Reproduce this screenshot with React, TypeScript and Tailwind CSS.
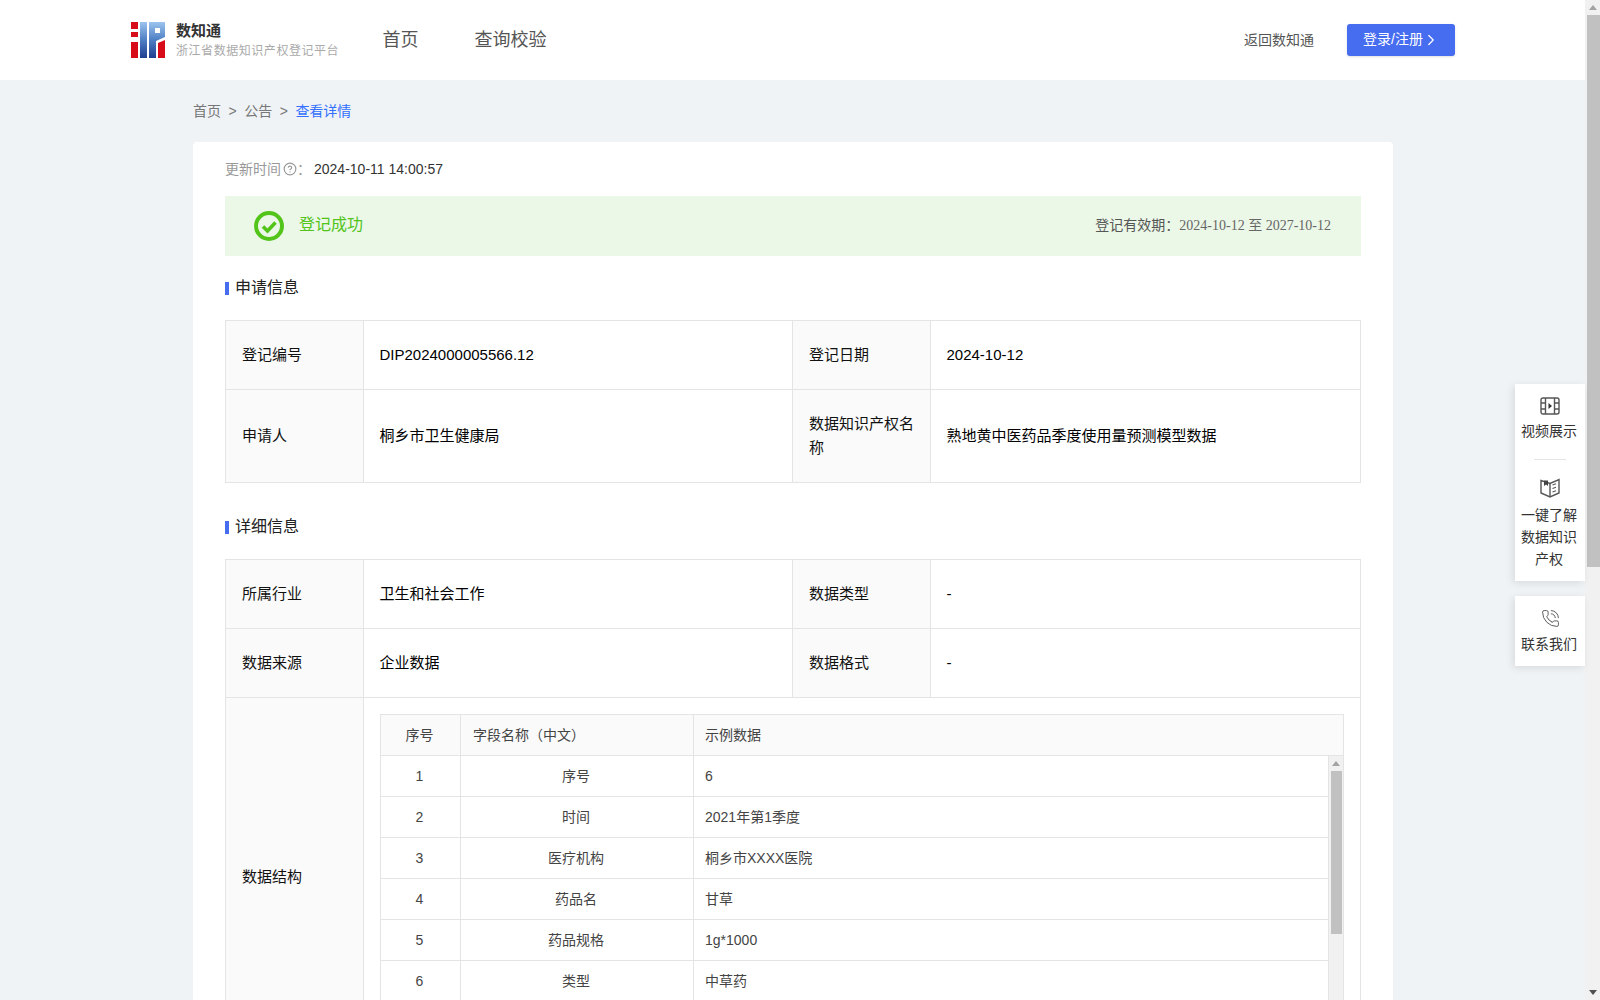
import { ChevronRight, CircleHelp, PhoneCall } from "lucide-react";

const fontStack = "font-['Liberation_Sans','Noto_Sans_CJK_SC',sans-serif]";

const fields = [
  ["1", "序号", "6"],
  ["2", "时间", "2021年第1季度"],
  ["3", "医疗机构", "桐乡市XXXX医院"],
  ["4", "药品名", "甘草"],
  ["5", "药品规格", "1g*1000"],
  ["6", "类型", "中草药"],
];

function Logo() {
  return (
    <svg width="34" height="36" viewBox="0 0 34 36" className="shrink-0">
      <defs>
        <linearGradient id="logo-blue" x1="0" y1="0" x2="0" y2="1">
          <stop offset="0" stopColor="#9cc4ee" />
          <stop offset="0.5" stopColor="#4f7fc4" />
          <stop offset="1" stopColor="#1f3f8f" />
        </linearGradient>
      </defs>
      <rect x="0" y="0" width="7" height="36" fill="#d80c18" />
      <rect x="0" y="7" width="7" height="3" fill="#fff" />
      <rect x="0" y="15" width="7" height="5" fill="#fff" />
      <rect x="9" y="0" width="7" height="36" fill="url(#logo-blue)" />
      <path d="M18 0H34V15L25 19V36H18Z" fill="url(#logo-blue)" />
      <rect x="24" y="6" width="5" height="5" fill="#fff" />
      <path d="M27 21L34 18V36H27Z" fill="#d80c18" />
    </svg>
  );
}

function SectionTitle({ title }: { title: string }) {
  return (
    <div className="flex items-center gap-[6px] text-base leading-6 text-[#222]">
      <span className="h-[13px] w-1 bg-[#466cf0]" />
      {title}
    </div>
  );
}

function LabelCell({ children }: { children: React.ReactNode }) {
  return (
    <td className="border border-[#e4e4e4] bg-[#fafafa] px-4 py-0 text-[15px] leading-6 text-[#111]">
      {children}
    </td>
  );
}

function ValueCell({ children }: { children: React.ReactNode }) {
  return (
    <td className="border border-[#e4e4e4] py-0 pl-[15.5px] pr-4 text-[15px] leading-6 text-black">
      {children}
    </td>
  );
}

function Cols() {
  return (
    <colgroup>
      <col className="w-[138px]" />
      <col className="w-[429px]" />
      <col className="w-[138px]" />
      <col />
    </colgroup>
  );
}

function VideoIcon() {
  return (
    <svg width="20" height="18" viewBox="0 0 20 18" fill="none" stroke="#555" strokeWidth="1.4">
      <rect x="1" y="1" width="18" height="16" rx="2" />
      <path d="M5.5 1V17M14.5 1V17M1 6H5.5M1 12H5.5M14.5 6H19M14.5 12H19" />
      <path d="M8.5 6L12 9L8.5 12Z" fill="#333" stroke="none" />
    </svg>
  );
}

function BookIcon() {
  return (
    <svg width="20" height="20" viewBox="0 0 20 20" fill="none" stroke="#555" strokeWidth="1.4">
      <path d="M1 2.5L10 5.5L19 1.5V15L10 19L1 15Z" />
      <path d="M10 5.5V19" />
      <path d="M4 2.5H8V8L6 6.5L4 8Z" fill="#444" stroke="none" />
      <path d="M12.5 7L16 5.8M12.5 10.5L16 9.3M12.5 14L16 12.8" strokeWidth="1.1" />
    </svg>
  );
}

function SuccessIcon() {
  return (
    <svg width="30" height="30" viewBox="0 0 30 30" fill="none" stroke="#52c41a">
      <circle cx="15" cy="15" r="13" strokeWidth="4" />
      <path d="M9 15.5L13.5 20L21.5 11.5" strokeWidth="3.6" />
    </svg>
  );
}

export default function App() {
  return (
    <div className={`flex h-screen overflow-hidden bg-[#eff3f6] ${fontStack}`}>
      <div className="relative w-[1585px] shrink-0">
        <header className="flex h-20 items-center bg-white pl-[131px] pr-[130px]">
          <Logo />
          <div className="ml-[11px] w-[206.5px] pt-0.5">
            <div className="text-[15px] leading-5 font-semibold text-[#333]">数知通</div>
            <div className="text-xs leading-5 tracking-[0.55px] text-[#aaa]">浙江省数据知识产权登记平台</div>
          </div>
          <nav className="flex gap-[56px] text-lg text-[#555]">
            <span>首页</span>
            <span>查询校验</span>
          </nav>
          <span className="ml-auto text-sm text-[#555]">返回数知通</span>
          <button className="ml-[33px] flex h-8 w-[108px] items-center rounded-[3px] bg-[#466cf0] pb-0.5 pl-4 text-sm text-white shadow-sm">
            登录/注册
            <ChevronRight size={18} strokeWidth={1.6} className="-ml-px mt-0.5" />
          </button>
        </header>

        <div className="ml-[193px] w-[1200px]">
          <div className="flex h-[62px] items-center text-sm text-[#777]">
            <span>首页</span>
            <span className="mx-[7.5px]">&gt;</span>
            <span>公告</span>
            <span className="mx-[7.5px]">&gt;</span>
            <span className="text-[#3370ff]">查看详情</span>
          </div>

          <main className="rounded-t bg-white px-8 pt-4">
            <div className="flex h-[22px] items-center text-sm">
              <span className="text-[#999]">更新时间</span>
              <CircleHelp size={14} className="ml-0.5 text-[#999]" />
              <span className="text-[#999]">：</span>
              <span className="ml-[3px] text-[#333]">2024-10-11 14:00:57</span>
            </div>

            <div className="mt-[16px] flex h-[60px] items-center justify-between bg-[#ebf7e7] pl-[29px] pr-[30px]">
              <div className="flex items-center gap-[15px] text-base text-[#52c41a]">
                <SuccessIcon />
                <span className="pb-0.5">登记成功</span>
              </div>
              <div className="pb-0.5 text-sm text-[#555]">
                登记有效期：
                <span className="font-['Liberation_Serif','Noto_Sans_CJK_SC',serif] text-[#666]">2024-10-12 至 2027-10-12</span>
              </div>
            </div>

            <div className="mt-[20px]">
              <SectionTitle title="申请信息" />
            </div>
            <table className="mt-[20px] w-full table-fixed border-collapse">
              <Cols />
              <tbody>
                <tr className="h-[69px]">
                  <LabelCell>登记编号</LabelCell>
                  <ValueCell>DIP2024000005566.12</ValueCell>
                  <LabelCell>登记日期</LabelCell>
                  <ValueCell>2024-10-12</ValueCell>
                </tr>
                <tr className="h-[93px]">
                  <LabelCell>申请人</LabelCell>
                  <ValueCell>桐乡市卫生健康局</ValueCell>
                  <LabelCell>数据知识产权名称</LabelCell>
                  <ValueCell>熟地黄中医药品季度使用量预测模型数据</ValueCell>
                </tr>
              </tbody>
            </table>

            <div className="mt-[32px]">
              <SectionTitle title="详细信息" />
            </div>
            <table className="mt-[20px] w-full table-fixed border-collapse">
              <Cols />
              <tbody>
                <tr className="h-[69px]">
                  <LabelCell>所属行业</LabelCell>
                  <ValueCell>卫生和社会工作</ValueCell>
                  <LabelCell>数据类型</LabelCell>
                  <ValueCell>-</ValueCell>
                </tr>
                <tr className="h-[69px]">
                  <LabelCell>数据来源</LabelCell>
                  <ValueCell>企业数据</ValueCell>
                  <LabelCell>数据格式</LabelCell>
                  <ValueCell>-</ValueCell>
                </tr>
                <tr>
                  <LabelCell>数据结构</LabelCell>
                  <td colSpan={3} className="border border-[#e4e4e4] p-4">
                    <div className="h-[326px] overflow-hidden border-x border-t border-[#e4e4e4] text-sm text-[#444]">
                      <div className="flex h-[41px] items-center border-b border-[#e4e4e4] bg-[#fafafa]">
                        <span className="w-[80px] border-r border-[#e4e4e4] pr-0.5 text-center leading-10">序号</span>
                        <span className="w-[233px] border-r border-[#e4e4e4] pl-3 leading-10">字段名称（中文）</span>
                        <span className="pl-[11px]">示例数据</span>
                      </div>
                      <div className="flex">
                        <div className="min-w-0 flex-1">
                          {fields.map((row) => (
                            <div key={row[0]} className="flex h-[41px] items-center border-b border-[#e4e4e4]">
                              <span className="w-[80px] border-r border-[#e4e4e4] pr-0.5 text-center leading-10">{row[0]}</span>
                              <span className="w-[233px] border-r border-[#e4e4e4] pr-0.5 text-center leading-10">{row[1]}</span>
                              <span className="pl-[11px]">{row[2]}</span>
                            </div>
                          ))}
                        </div>
                        <div className="flex h-[286px] w-[15px] shrink-0 flex-col items-center border-l border-[#e4e4e4] bg-[#f1f1f1]">
                          <span className="mt-[5px] h-0 w-0 border-x-[4px] border-b-[5px] border-x-transparent border-b-[#a3a3a3]" />
                          <span className="mt-[5px] h-[163px] w-[11px] bg-[#c1c1c1]" />
                        </div>
                      </div>
                    </div>
                  </td>
                </tr>
              </tbody>
            </table>
          </main>
        </div>

        <aside className="absolute right-0 top-[384px] w-[70px] text-center text-sm text-[#333]">
          <div className="h-[197px] bg-white pt-[13px] shadow-[-2px_2px_8px_rgba(0,0,0,0.1)]">
            <div className="flex justify-center">
              <VideoIcon />
            </div>
            <div className="mt-[5px] pr-0.5 leading-[22px]">视频展示</div>
            <div className="mx-auto mt-[17px] h-px w-8 bg-[#e4e4e4]" />
            <div className="mt-[18px] flex justify-center">
              <BookIcon />
            </div>
            <div className="mt-[6px] pr-0.5 leading-[22px]">
              一键了解
              <br />
              数据知识
              <br />
              产权
            </div>
          </div>
          <div className="mt-[15px] h-[70px] bg-white pt-[13px] shadow-[-2px_2px_8px_rgba(0,0,0,0.1)]">
            <div className="flex justify-center">
              <PhoneCall size={19} strokeWidth={1.2} className="text-[#555]" />
            </div>
            <div className="mt-[5px] pr-0.5 leading-[22px]">联系我们</div>
          </div>
        </aside>
      </div>

      <div className="flex h-full w-[15px] shrink-0 flex-col items-center bg-[#f1f1f1]">
        <span className="mt-[5px] h-0 w-0 border-x-[4px] border-b-[5px] border-x-transparent border-b-[#a3a3a3]" />
        <span className="ml-0.5 mt-[5px] h-[552px] w-[13px] bg-[#c1c1c1]" />
        <span className="mb-[5px] mt-auto h-0 w-0 border-x-[4px] border-t-[5px] border-x-transparent border-t-[#505050]" />
      </div>
    </div>
  );
}
